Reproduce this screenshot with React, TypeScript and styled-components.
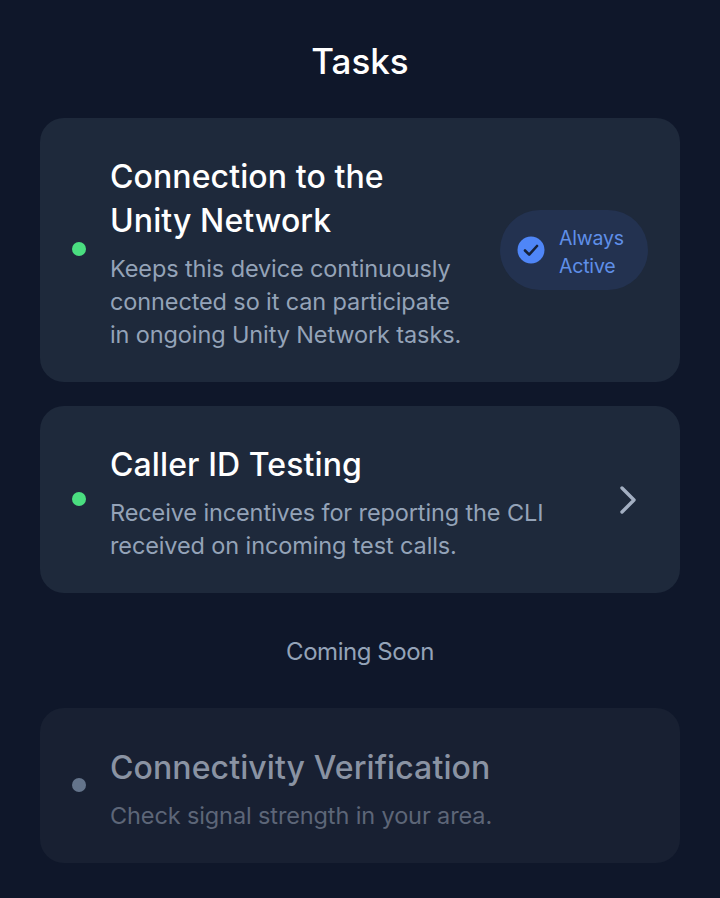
import styled, { createGlobalStyle } from "styled-components";

const GlobalStyle = createGlobalStyle`
  html, body {
    margin: 0;
    padding: 0;
    background: #0f172a;
  }
  * {
    box-sizing: border-box;
  }
`;

const Page = styled.div`
  width: 720px;
  height: 898px;
  overflow: hidden;
  padding: 38px 40px 0;
  background: #0f172a;
  font-family: Inter, "Liberation Sans", sans-serif;
`;

const Heading = styled.h1`
  margin: 0 0 34px;
  height: 46px;
  line-height: 46px;
  font-size: 35px;
  font-weight: 500;
  letter-spacing: 0;
  text-align: center;
  color: #ffffff;
`;

const Card = styled.div<{ $muted?: boolean; $height: number }>`
  display: flex;
  align-items: center;
  height: ${(p) => p.$height}px;
  margin-bottom: 24px;
  padding: 0 32px;
  border-radius: 24px;
  background: ${(p) => (p.$muted ? "#182032" : "#1e293b")};
`;

const Dot = styled.span<{ $muted?: boolean }>`
  flex: none;
  width: 14px;
  height: 14px;
  margin: 0 24px 2px 0;
  border-radius: 50%;
  background: ${(p) => (p.$muted ? "#64748b" : "#4ade80")};
`;

const Body = styled.div`
  flex: 1;
  min-width: 0;
  padding-top: 6px;
`;

const Title = styled.div<{ $muted?: boolean }>`
  font-size: 32px;
  line-height: 44px;
  font-weight: 500;
  letter-spacing: 0.1px;
  color: ${(p) => (p.$muted ? "#8a93a3" : "#ffffff")};
`;

const Desc = styled.div<{ $muted?: boolean }>`
  margin-top: 9px;
  font-size: 23.5px;
  line-height: 33px;
  letter-spacing: -0.12px;
  color: ${(p) => (p.$muted ? "#5d6678" : "#94a3b8")};
`;

const Badge = styled.div`
  flex: none;
  display: flex;
  align-items: center;
  gap: 14px;
  width: 148px;
  height: 80px;
  padding-left: 17px;
  border-radius: 40px;
  background: #233250;
`;

const BadgeText = styled.div`
  padding-top: 3px;
  font-size: 19.5px;
  line-height: 28px;
  letter-spacing: -0.2px;
  color: #5f8fe8;
`;

const SectionLabel = styled.div`
  margin: 43px 0 40px;
  height: 32px;
  line-height: 32px;
  font-size: 24px;
  letter-spacing: -0.45px;
  text-align: center;
  color: #94a3b8;
`;

const Chevron = styled.svg`
  flex: none;
  width: 40px;
  height: 40px;
  margin-right: 1px;
`;

const CheckIcon = () => (
  <svg width="28" height="28" viewBox="0 0 28 28" style={{ flex: "none" }}>
    <circle cx="14" cy="14" r="13.5" fill="#4f86f7" />
    <path d="M8 14.5l4.2 4.2L20 10" fill="none" stroke="#16223a" strokeWidth="2.6" strokeLinecap="round" strokeLinejoin="round" />
  </svg>
);

export default function App() {
  return (
    <Page>
      <GlobalStyle />
      <Heading>Tasks</Heading>

      <Card $height={264}>
        <Dot />
        <Body>
          <Title>
            Connection to the
            <br />
            Unity Network
          </Title>
          <Desc>
            Keeps this device continuously
            <br />
            connected so it can participate
            <br />
            in ongoing Unity Network tasks.
          </Desc>
        </Body>
        <Badge>
          <CheckIcon />
          <BadgeText>
            Always
            <br />
            Active
          </BadgeText>
        </Badge>
      </Card>

      <Card $height={187}>
        <Dot />
        <Body>
          <Title>Caller ID Testing</Title>
          <Desc>
            Receive incentives for reporting the CLI
            <br />
            received on incoming test calls.
          </Desc>
        </Body>
        <Chevron viewBox="0 0 40 40">
          <path d="M15 8l12 12-12 12" fill="none" stroke="#a3afc2" strokeWidth="3.4" strokeLinecap="round" strokeLinejoin="round" />
        </Chevron>
      </Card>

      <SectionLabel>Coming Soon</SectionLabel>

      <Card $muted $height={155}>
        <Dot $muted />
        <Body>
          <Title $muted>Connectivity Verification</Title>
          <Desc $muted>Check signal strength in your area.</Desc>
        </Body>
      </Card>
    </Page>
  );
}
